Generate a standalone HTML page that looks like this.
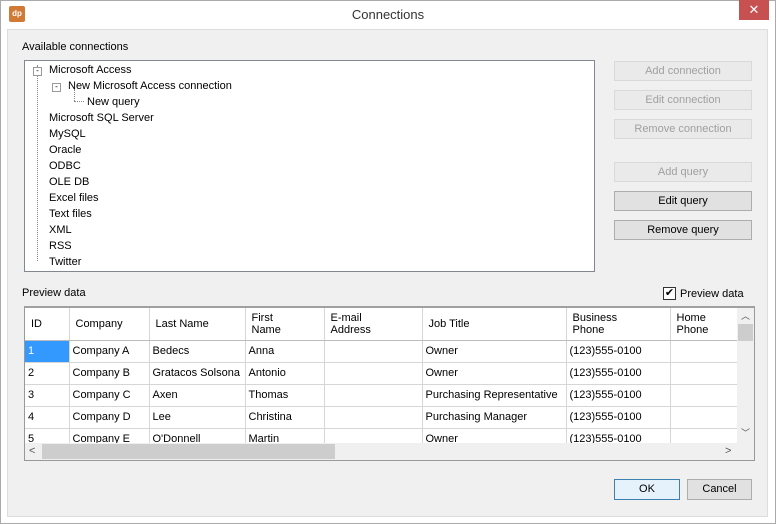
<!DOCTYPE html><html><head><style>
*{box-sizing:border-box;margin:0;padding:0}
body{width:776px;height:524px;background:#fff;font-family:"Liberation Sans",sans-serif;font-size:11px;color:#000;position:relative;overflow:hidden}
.win{position:absolute;left:0;top:0;width:776px;height:524px;background:#fff}
.frame{position:absolute;left:0;top:0;width:776px;height:524px;border:1px solid #aaa}
.body{position:absolute;left:7px;top:29px;width:761px;height:488px;background:#f0f0f0;border:1px solid #ddd}
.a{position:absolute}
.btn{position:absolute;left:614px;width:138px;height:20px;border:1px solid #adadad;background:#e1e1e1;text-align:center;line-height:18px;font-size:11px}
.dis{border-color:#d9d9d9;background:#eaeaea;color:#a0a0a0}
.tree div{position:absolute;white-space:nowrap}
table{border-collapse:collapse;font-size:11px}
td{border-right:1px solid #d6d6d6;border-bottom:1px solid #d6d6d6;height:22px;padding:0 3px;white-space:nowrap;overflow:hidden}
th{font-weight:normal;text-align:left;border-right:1px solid #d6d6d6;border-bottom:1px solid #bbb;height:32px;padding:0 6px;line-height:12px;vertical-align:middle}
</style></head><body>
<div class="win">
<div class="frame"></div>
<div class="a" style="left:9px;top:6px;width:16px;height:16px;background:#d07a35;border-radius:2px;color:#fff;font-size:8px;font-weight:bold;text-align:center;line-height:16px">dp</div>
<div class="a" style="left:0;width:776px;top:7px;text-align:center;font-size:13px;color:#333">Connections</div>
<div class="a" style="left:739px;top:0;width:30px;height:20px;background:#c75050;color:#fff;text-align:center;line-height:20px;font-size:13px">✕</div>
<div class="body"></div>
<div class="a" style="left:22px;top:41px">Available connections</div>
<div class="a tree" style="left:24px;top:60px;width:571px;height:212px;background:#fff;border:1px solid #828790">
<div style="left:12px;top:4px;width:1px;height:196px;border-left:1px dotted #888"></div>
<div style="left:8px;top:6px;width:9px;height:9px;border:1px solid #999;background:#fff;font-size:8px;line-height:6px;text-align:center">-</div>
<div style="left:24px;top:3px">Microsoft Access</div>
<div style="left:27px;top:22px;width:9px;height:9px;border:1px solid #999;background:#fff;font-size:8px;line-height:6px;text-align:center">-</div>
<div style="left:43px;top:19px">New Microsoft Access connection</div>
<div style="left:49px;top:28px;width:1px;height:12px;border-left:1px dotted #888"></div>
<div style="left:49px;top:40px;width:10px;border-top:1px dotted #888"></div>
<div style="left:62px;top:35px">New query</div>
<div style="left:24px;top:51px">Microsoft SQL Server</div>
<div style="left:24px;top:67px">MySQL</div>
<div style="left:24px;top:83px">Oracle</div>
<div style="left:24px;top:99px">ODBC</div>
<div style="left:24px;top:115px">OLE DB</div>
<div style="left:24px;top:131px">Excel files</div>
<div style="left:24px;top:147px">Text files</div>
<div style="left:24px;top:163px">XML</div>
<div style="left:24px;top:179px">RSS</div>
<div style="left:24px;top:195px">Twitter</div>
</div>
<div class="btn dis" style="top:61px">Add connection</div>
<div class="btn dis" style="top:90px">Edit connection</div>
<div class="btn dis" style="top:119px">Remove connection</div>
<div class="btn dis" style="top:162px">Add query</div>
<div class="btn" style="top:191px">Edit query</div>
<div class="btn" style="top:220px">Remove query</div>
<div class="a" style="left:22px;top:287px">Preview data</div>
<div class="a" style="left:663px;top:287px;width:13px;height:13px;border:1px solid #333;background:#fff;font-size:11px;line-height:11px;text-align:center">✔</div>
<div class="a" style="left:680px;top:288px">Preview data</div>
<div class="a" style="left:24px;top:306px;width:731px;height:155px;border:1px solid #999;border-top:2px solid #a0a0a0;background:#fff;overflow:hidden">
<table style="table-layout:fixed;width:713px">
<colgroup><col style="width:44px"><col style="width:80px"><col style="width:96px"><col style="width:79px"><col style="width:98px"><col style="width:144px"><col style="width:104px"><col style="width:68px"></colgroup>
<tr><th>ID</th><th>Company</th><th>Last Name</th><th>First<br>Name</th><th>E-mail<br>Address</th><th>Job Title</th><th>Business<br>Phone</th><th>Home<br>Phone</th></tr>
<tr><td style="background:#3399ff;color:#fff">1</td><td>Company A</td><td>Bedecs</td><td>Anna</td><td></td><td>Owner</td><td>(123)555-0100</td><td></td></tr>
<tr><td>2</td><td>Company B</td><td>Gratacos Solsona</td><td>Antonio</td><td></td><td>Owner</td><td>(123)555-0100</td><td></td></tr>
<tr><td>3</td><td>Company C</td><td>Axen</td><td>Thomas</td><td></td><td>Purchasing Representative</td><td>(123)555-0100</td><td></td></tr>
<tr><td>4</td><td>Company D</td><td>Lee</td><td>Christina</td><td></td><td>Purchasing Manager</td><td>(123)555-0100</td><td></td></tr>
<tr><td>5</td><td>Company E</td><td>O'Donnell</td><td>Martin</td><td></td><td>Owner</td><td>(123)555-0100</td><td></td></tr>
</table>
<div class="a" style="left:712px;top:0;width:17px;height:135px;background:#f0f0f0"><div class="a" style="left:4px;top:1px;font-size:9px;color:#555">︿</div><div class="a" style="left:1px;top:16px;width:15px;height:17px;background:#cdcdcd"></div><div class="a" style="left:4px;top:118px;font-size:9px;color:#555">﹀</div></div>
<div class="a" style="left:0;top:135px;width:729px;height:17px;background:#f0f0f0"><div class="a" style="left:4px;top:2px;color:#555">&lt;</div><div class="a" style="left:17px;top:1px;width:293px;height:15px;background:#cdcdcd"></div><div class="a" style="left:700px;top:2px;color:#555">&gt;</div></div>
</div>
<div class="a" style="left:614px;top:479px;width:66px;height:21px;border:1px solid #3c7fb1;background:#e5f1fb;text-align:center;line-height:19px">OK</div>
<div class="a" style="left:687px;top:479px;width:65px;height:21px;border:1px solid #adadad;background:#e1e1e1;text-align:center;line-height:19px">Cancel</div>
</div>
</body></html>
